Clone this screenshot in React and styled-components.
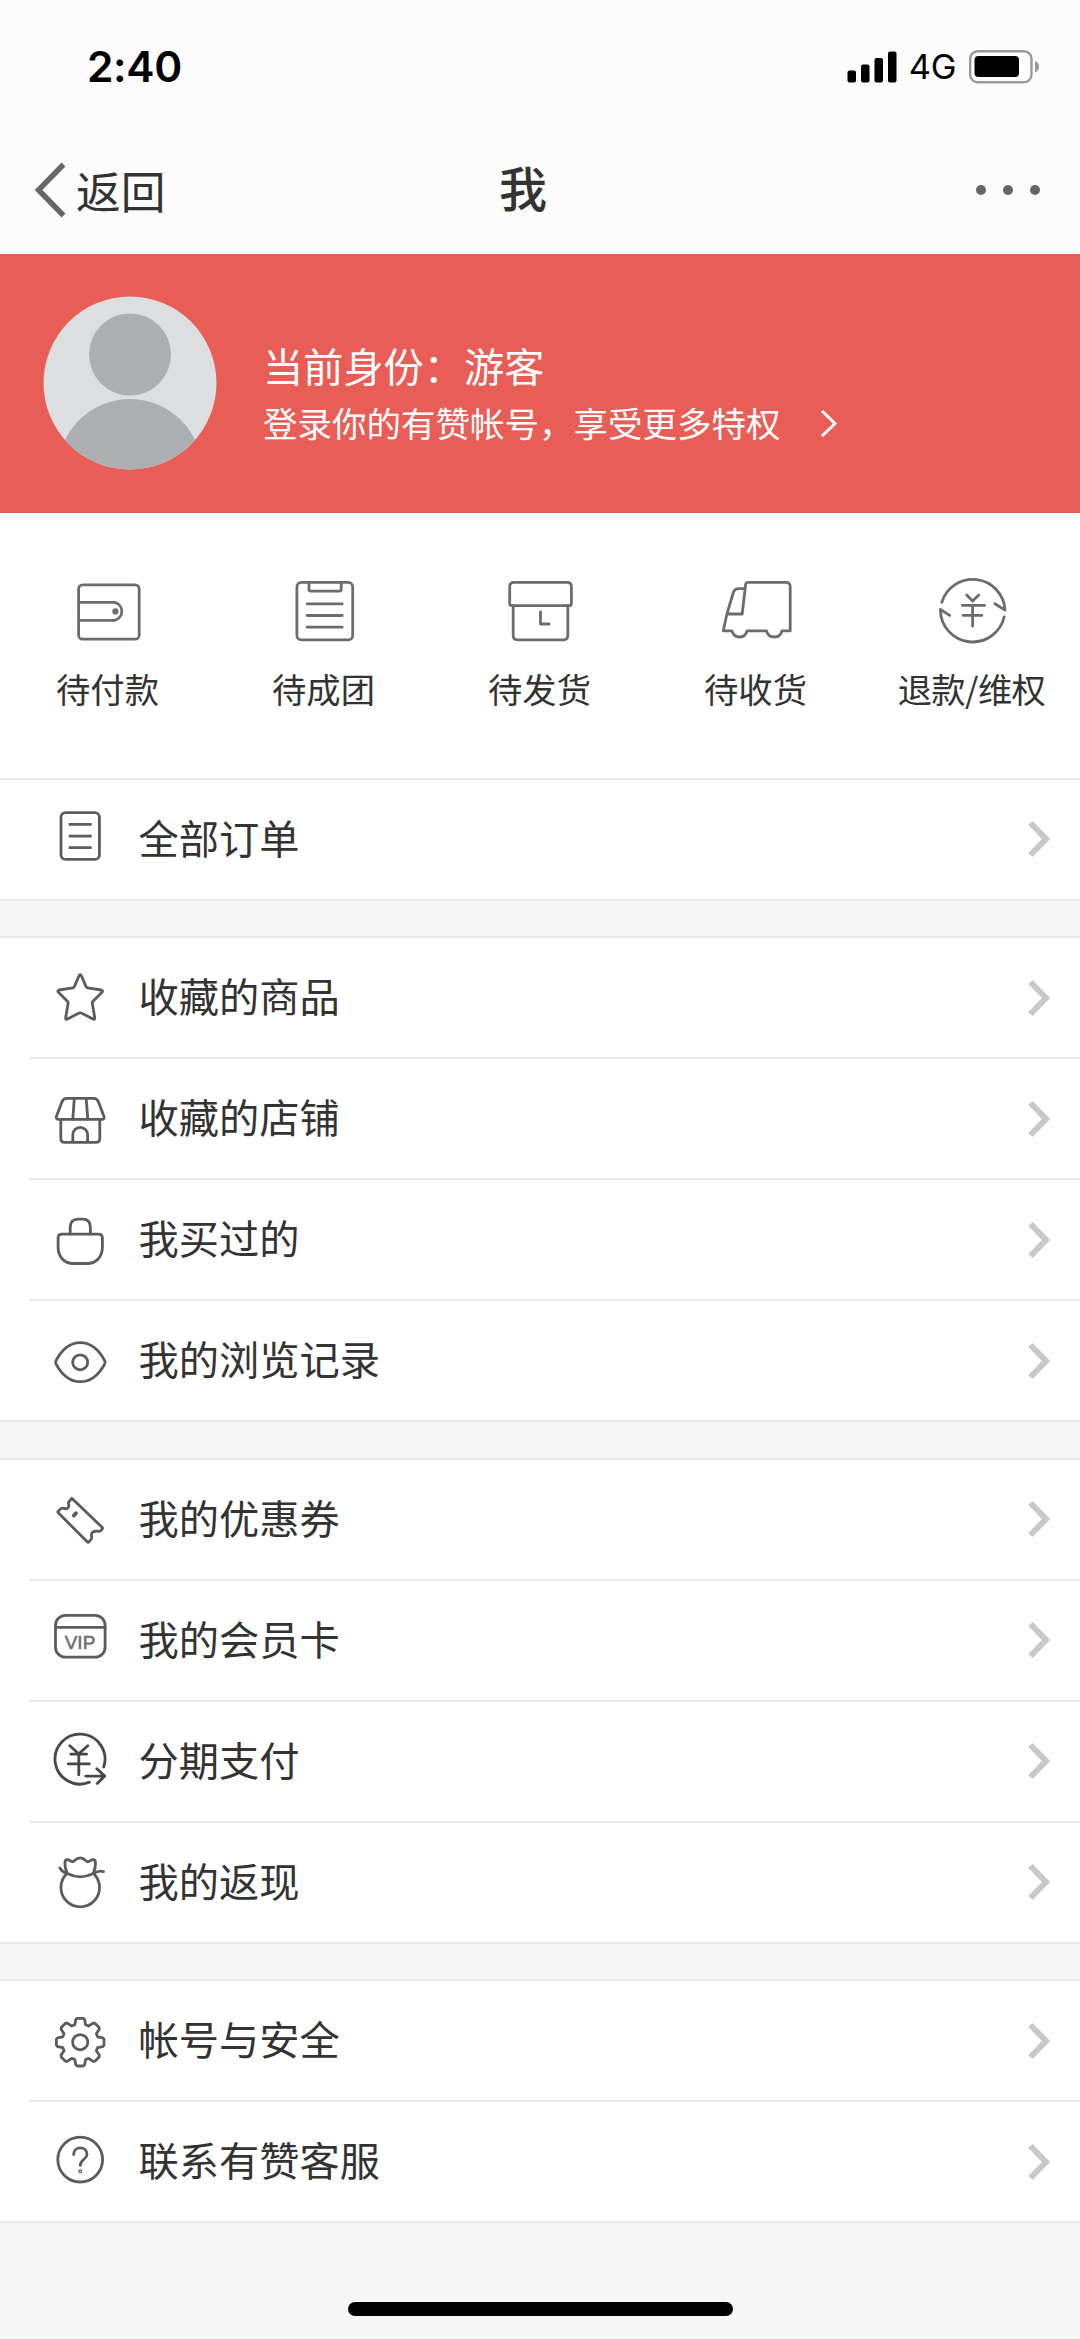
import React from "react";
import styled, { createGlobalStyle } from "styled-components";

const GlobalStyle = createGlobalStyle`
  * { box-sizing: border-box; }
  body {
    margin: 0;
    background: #f6f6f6;
    font-family: "Noto Sans CJK SC", "Liberation Sans", sans-serif;
    color: #333;
  }
`;

const Page = styled.main`
  width: 1080px;
  height: 2339px;
  display: flex;
  flex-direction: column;
  overflow: hidden;
  background: #f6f6f6;
`;

const Header = styled.header`
  height: 254px;
  background: #fcfcfc;
`;

const StatusBar = styled.div`
  height: 132px;
  display: flex;
  justify-content: space-between;
  padding: 0 40px 0 87px;
`;

const Clock = styled.span`
  color: #000;
  font: 600 42.5px/133px Inter, sans-serif;
  letter-spacing: -0.4px;
`;

const StatusIcons = styled.div`
  display: flex;
  align-items: center;
  gap: 13px;
  padding-top: 1px;
`;

const Network = styled.span`
  margin-left: -1px;
  color: #000;
  font: 400 34.5px/134px Inter, sans-serif;
  letter-spacing: -0.4px;
`;

const NavBar = styled.nav`
  height: 121px;
  display: grid;
  grid-template-columns: 499px 1fr auto;
  align-items: center;
  padding: 0 40px 5px 0;
`;

const Back = styled.div`
  display: flex;
  align-items: center;
  gap: 10px;
  padding-left: 34px;
  font-size: 44.8px;
  line-height: 60px;
`;

const BackLabel = styled.span`
  padding-bottom: 1px;
`;

const Title = styled.h1`
  margin: 0;
  padding-bottom: 9px;
  font-size: 48px;
  font-weight: 500;
  line-height: 60px;
`;

const Banner = styled.section`
  height: 259px;
  display: flex;
  align-items: center;
  gap: 46px;
  padding: 0 0 2px 43px;
  background: #e85d55;
  color: #fff;
`;

const Identity = styled.div`
  padding-top: 20px;
`;

const IdentityName = styled.div`
  font-size: 40.2px;
  line-height: 58px;
`;

const IdentityHint = styled.div`
  display: flex;
  align-items: center;
  gap: 38px;
  font-size: 34.5px;
  line-height: 56px;
`;

const Orders = styled.section`
  height: 264.5px;
  display: grid;
  grid-template-columns: repeat(5, 216px);
  background: #fff;
`;

const OrderTab = styled.div`
  display: flex;
  flex-direction: column;
  align-items: center;
  padding: 58px 1px 0 0;
  font-size: 34.3px;
  line-height: 50px;
  letter-spacing: ${(p) => (p.$tight ? "-0.6px" : "0")};
  white-space: nowrap;
`;

const OrderIcon = styled.svg`
  width: 80px;
  height: 80px;
  margin-bottom: 12px;
  fill: none;
  stroke: #6c6c6c;
  stroke-width: 2.8;
  stroke-linejoin: round;
  stroke-linecap: round;
`;

const Group = styled.section`
  flex: none;
  margin-bottom: 35.5px;
  background: #fff;
  border-top: 2px solid #e9e9e9;
  border-bottom: 2px solid #e9e9e9;
`;

const Row = styled.div`
  height: 119px;
  display: flex;
  align-items: center;
  padding: 0 29.5px 0 50.4px;
`;

const Divider = styled.div`
  height: 2px;
  margin-left: 29px;
  background: #e9e9e9;
`;

const RowIcon = styled.svg`
  width: 60px;
  height: 60px;
  fill: none;
  stroke: ${(p) => p.$tone || "#5c5c5c"};
  stroke-width: 2.8;
  stroke-linejoin: round;
  stroke-linecap: round;
`;

const RowLabel = styled.span`
  flex: 1;
  margin-left: 28.1px;
  padding-bottom: 5px;
  font-size: 40.25px;
  line-height: 60px;
`;

const HomeArea = styled.footer`
  display: flex;
  justify-content: center;
  padding-top: 43.5px;
`;

const HomeIndicator = styled.div`
  width: 385px;
  height: 14px;
  border-radius: 7px;
  background: #000;
`;

const VipText = styled.text`
  font: 19px "Liberation Sans", Arial, sans-serif;
  fill: #6c6c6c;
  stroke: #6c6c6c;
  stroke-width: 0.5;
`;

const gearPoints = Array.from({ length: 8 }, (_, i) => {
  const a = (i * Math.PI) / 4;
  return [
    [17.4, -5.4],
    [22.6, -4.4],
    [23.8, -3],
    [23.8, 3],
    [22.6, 4.4],
    [17.4, 5.4],
  ]
    .map(([r, t]) => {
      const x = 30.2 + r * Math.cos(a) - t * Math.sin(a);
      const y = 31.2 + r * Math.sin(a) + t * Math.cos(a);
      return `${x.toFixed(2)},${y.toFixed(2)}`;
    })
    .join(" ");
}).join(" ");

const rowIcons = {
  list: (
    <>
      <rect x="11" y="3.6" width="38.4" height="46.8" rx="4.5" />
      <path strokeLinecap="butt" d="M18.7 15.4H41.7M18.7 27.1H41.7M18.7 38.7H41.7" />
    </>
  ),
  star: (
    <path d="M30.2 6.6Q31 6.6 31.5 8L36 18.6Q36.4 19.7 37.6 19.9L51.3 22Q53.5 22.6 52 24.2L43 33.2Q42.1 34.1 42.3 35.2L44.7 49.4Q45 52 42.9 51L31.8 45.2Q30.2 44.5 28.6 45.2L17.5 51Q15.4 52 15.7 49.4L18.1 35.2Q18.3 34.1 17.4 33.2L8.4 24.2Q6.9 22.6 9.1 22L22.8 19.9Q24 19.7 24.4 18.6L28.9 8Q29.4 6.6 30.2 6.6Z" />
  ),
  shop: (
    <>
      <path d="M17 9.4H43.4Q47 9.4 48.3 12.6L54 27.6Q54.6 30.4 52 30.4H8.4Q5.8 30.4 6.4 27.6L12.1 12.6Q13.4 9.4 17 9.4Z" />
      <path d="M24.3 9.4L22.8 30.4M36.2 9.4L37.8 30.4" />
      <path d="M10.8 30.4V49.5Q10.8 53.4 14.8 53.4H45.8Q49.8 53.4 49.8 49.5V30.4M22.8 53V45.5A7.4 7.2 0 0 1 37.6 45.5V53" />
    </>
  ),
  bag: (
    <>
      <path d="M20.2 24V17.5Q20.2 9.2 28 9.2H32.6Q40.4 9.2 40.4 17.5V24" />
      <path d="M12 24.1H48.5Q52.4 24.1 52.4 28V37C52.4 47 46 53.5 37.5 53.5H23C14.5 53.5 8.1 47 8.1 37V28Q8.1 24.1 12 24.1Z" />
    </>
  ),
  eye: (
    <>
      <path d="M5.9 29.8C12 18.5 20.5 11.7 30.3 11.7S48.7 18.5 54.8 29.8Q55.6 31.3 54.8 32.8C48.7 44 40.1 50.7 30.3 50.7S12 44 5.9 32.8Q5.1 31.3 5.9 29.8Z" />
      <circle cx="30.2" cy="31.3" r="7.5" />
    </>
  ),
  ticket: (
    <>
      <path d="M21.8 9.3L52.1 38.3Q53 39.3 52 40.3L50.6 41.7C48.5 43.6 46.4 40.7 43 43S42.8 48.2 41.2 50.2L39 52.9Q38.2 53.8 37.2 52.8L8.3 23.8Q7.4 22.9 8.3 22L11.4 19.4C13.4 17.8 15.2 21.4 17.8 18.9S17.4 14.6 18.8 12.8Z" />
      <path strokeWidth="3.8" d="M26 24.2L23.8 26.6" />
    </>
  ),
  vip: (
    <>
      <rect x="5.5" y="5.4" width="49.6" height="41.8" rx="10" />
      <path d="M6 17.4H55" />
      <VipText x="30" y="39" textAnchor="middle">VIP</VipText>
    </>
  ),
  installment: (
    <>
      <path d="M53.7 36A25 25 0 1 0 39.3 51.3M35.8 45.1H54.8M46.8 37.8L54.8 45.1L47.2 52.4" />
      <path d="M19.8 14.8L28.8 22.8L37.8 14.8M20.8 23.1H36.6M18.2 32.8H39.4M28.8 22.8V43.8" />
    </>
  ),
  cashback: (
    <>
      <path d="M17 21.5A19.3 19.3 0 1 0 43.5 21.5" />
      <path d="M17.2 21.6Q14.6 15.5 14.9 10.5C15.4 6.5 18.6 7.6 20.4 8.9S24.1 9.5 25.3 8C28 5.1 32.4 5.1 35 8C36.2 9.5 38.1 10.2 40 8.9S45.1 6.5 45.5 10.5Q45.8 15.5 43.3 21.6Q30.2 28.2 17.2 21.6Z" />
      <path d="M9.8 15.9Q12 20 17 21.5M43.5 21.5Q48.5 18.2 53.5 19.6" />
    </>
  ),
  gear: (
    <>
      <polygon points={gearPoints} />
      <circle cx="30.2" cy="31.2" r="7.6" />
    </>
  ),
  help: (
    <>
      <circle cx="30.2" cy="27.6" r="22.4" />
      <path d="M23.6 22.6C23.8 13.5 37 13.8 37 22.4C37 27 30.3 27.6 30.3 33.4" />
      <circle cx="30.2" cy="39.3" r="0.6" />
    </>
  ),
};

const orderIcons = {
  wallet: (
    <>
      <rect x="10.6" y="13.8" width="60.6" height="54.4" rx="4" />
      <path d="M10.6 31.3H46.5A9.2 9.2 0 0 1 46.5 49.3H10.6" />
      <circle cx="47.4" cy="40.4" r="1.7" fill="#6c6c6c" />
    </>
  ),
  clipboard: (
    <>
      <rect x="12.9" y="11.4" width="55.8" height="57.5" rx="4.5" />
      <path d="M25 12V18.5Q25 20.1 26.8 20.1H55.4Q57.2 20.1 57.2 18.5V12M23.2 32.8H58.2M23.2 44.5H58.2M23.2 56.1H58.2" />
    </>
  ),
  box: (
    <>
      <path d="M14 11.4H67Q71.4 11.4 71.4 15.5V32.5Q71.4 34.6 69.3 34.6H11.8Q9.7 34.6 9.7 32.5V15.5Q9.7 11.4 14 11.4Z" />
      <path d="M13.2 34.6V64.5Q13.2 68.8 17.5 68.8H63.5Q67.8 68.8 67.8 64.5V34.6M40.5 41V53H49" />
    </>
  ),
  truck: (
    <path d="M26.2 43H10.9L17.5 21Q18.8 17.6 23 17.6H28.8M26.2 43L29.6 13.5Q29.9 11.3 32 11.3H69.8Q74.2 11.3 74.2 15.5V59.9H66C64 68 52.5 68 50.5 59.9H31C29 68 18 68 16 59.9H7.3L10.9 43" />
  ),
  refund: (
    <>
      <path d="M9.8 31.4A32.3 32.3 0 0 1 73 39.1L62.9 32.7M72.2 45.8A32.3 32.3 0 0 1 8.4 38.5L17.7 44.4" />
      <path d="M34.7 23.9L40.6 29.9L46.8 23.9M30.3 34.3H52.6M31.2 44.4H49.8M40.6 34.3V55.2" />
    </>
  ),
};

const orderTabs = [
  ["wallet", "待付款"],
  ["clipboard", "待成团"],
  ["box", "待发货"],
  ["truck", "待收货"],
  ["refund", "退款/维权"],
];

const groups = [
  [["list", "全部订单"]],
  [
    ["star", "收藏的商品"],
    ["shop", "收藏的店铺"],
    ["bag", "我买过的"],
    ["eye", "我的浏览记录"],
  ],
  [
    ["ticket", "我的优惠券"],
    ["vip", "我的会员卡"],
    ["installment", "分期支付", "#484848"],
    ["cashback", "我的返现"],
  ],
  [
    ["gear", "帐号与安全"],
    ["help", "联系有赞客服"],
  ],
];

function Signal() {
  return (
    <svg width="50" height="34" viewBox="0 0 50 34">
      <rect x="0.5" y="20.5" width="8.5" height="12" rx="2" />
      <rect x="14" y="14.5" width="8.5" height="18" rx="2" />
      <rect x="27.5" y="8" width="8.5" height="24.5" rx="2" />
      <rect x="41" y="1.5" width="8.5" height="31" rx="2" />
    </svg>
  );
}

function Battery() {
  return (
    <svg width="71" height="34" viewBox="0 0 71 34">
      <rect x="1.2" y="1.2" width="61.3" height="31" rx="7.5" fill="#fff" stroke="#999" strokeWidth="2.4" />
      <rect x="5.5" y="6" width="44.5" height="21" rx="4" />
      <path d="M66 11Q70 12.5 70 16.7T66 22.5Z" fill="#999" />
    </svg>
  );
}

function Avatar() {
  return (
    <svg width="174" height="174" viewBox="0 0 174 174">
      <defs>
        <clipPath id="avatar-clip">
          <circle cx="87" cy="87" r="86.5" />
        </clipPath>
      </defs>
      <g clipPath="url(#avatar-clip)">
        <rect width="174" height="174" fill="#dcdee0" />
        <circle cx="87" cy="58.5" r="41" fill="#acaeb0" />
        <circle cx="87" cy="175" r="72" fill="#acaeb0" />
      </g>
    </svg>
  );
}

export default function App() {
  return (
    <Page>
      <GlobalStyle />
      <Header>
        <StatusBar>
          <Clock>2:40</Clock>
          <StatusIcons>
            <Signal />
            <Network>4G</Network>
            <Battery />
          </StatusIcons>
        </StatusBar>
        <NavBar>
          <Back>
            <svg width="32" height="56" viewBox="0 0 32 56" fill="none" stroke="#666" strokeWidth="5.4">
              <path d="M29.5 2.5L4.5 28L29.5 53.5" />
            </svg>
            <BackLabel>返回</BackLabel>
          </Back>
          <Title>我</Title>
          <svg width="64" height="10" viewBox="0 0 64 10" fill="#666">
            <circle cx="5" cy="5" r="5" />
            <circle cx="32" cy="5" r="5" />
            <circle cx="59" cy="5" r="5" />
          </svg>
        </NavBar>
      </Header>
      <Banner>
        <Avatar />
        <Identity>
          <IdentityName>当前身份：游客</IdentityName>
          <IdentityHint>
            登录你的有赞帐号，享受更多特权
            <svg width="20" height="32" viewBox="0 0 20 32" fill="none" stroke="#fff" strokeWidth="3">
              <path d="M3 5L16 17.5L3 30" />
            </svg>
          </IdentityHint>
        </Identity>
      </Banner>
      <Orders>
        {orderTabs.map(([icon, label]) => (
          <OrderTab key={icon} $tight={label.includes("/")}>
            <OrderIcon viewBox="0 0 80 80">{orderIcons[icon]}</OrderIcon>
            {label}
          </OrderTab>
        ))}
      </Orders>
      {groups.map((rows) => (
        <Group key={rows[0][0]}>
          {rows.map(([icon, label, tone], i) => (
            <React.Fragment key={icon}>
              {i > 0 && <Divider />}
              <Row>
                <RowIcon viewBox="0 0 60 60" $tone={tone}>{rowIcons[icon]}</RowIcon>
                <RowLabel>{label}</RowLabel>
                <svg width="24" height="40" viewBox="0 0 24 40" fill="none" stroke="#c8c8c8" strokeWidth="6">
                  <path d="M3.5 4L19 20L3.5 36" />
                </svg>
              </Row>
            </React.Fragment>
          ))}
        </Group>
      ))}
      <HomeArea>
        <HomeIndicator />
      </HomeArea>
    </Page>
  );
}
